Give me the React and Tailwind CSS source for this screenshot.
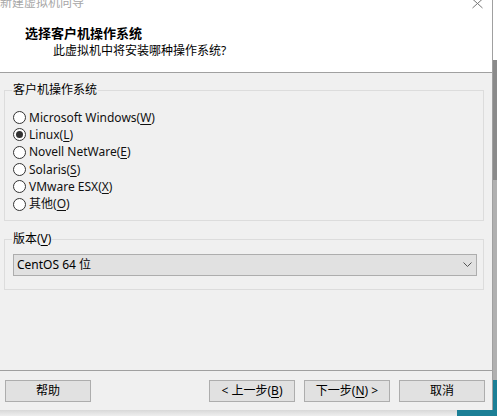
import React from 'react';

const font = "font-['Noto_Sans','Noto_Sans_CJK_SC',sans-serif]";

const options = [
  { label: 'Microsoft Windows', key: 'W' },
  { label: 'Linux', key: 'L', checked: true },
  { label: 'Novell NetWare', key: 'E' },
  { label: 'Solaris', key: 'S' },
  { label: 'VMware ESX', key: 'X' },
  { label: '其他', key: 'O' },
];

function Radio({ checked }) {
  return (
    <span className="w-[13px] h-[13px] rounded-full border border-[#333] bg-white flex items-center justify-center shrink-0">
      {checked && <span className="w-[7px] h-[7px] rounded-full bg-[#333]" />}
    </span>
  );
}

function Btn({ children }) {
  return (
    <button className="w-[86px] h-[22px] bg-[#e1e1e1] border border-[#adadad] text-[12px] leading-[20px] text-black">
      {children}
    </button>
  );
}

export default function App() {
  return (
    <div className={`w-[497px] h-[416px] flex flex-col bg-[#c4c4c4] overflow-hidden ${font}`}>
      <div className="flex">
        <div className="w-[493px] h-[410px] flex flex-col bg-[#f0f0f0] border-r border-[#a0a0a0]">
          {/* header */}
          <div className="h-[73px] bg-white border-b border-[#a0a0a0] flex flex-col shrink-0">
            <div className="h-[11px] flex justify-between overflow-hidden">
              <span className="text-[12px] leading-[12px] -mt-[3px] text-[#a6a6a6]">新建虚拟机向导</span>
              <svg className="mr-[9px] -mt-[1px]" width="11" height="10" viewBox="0 0 11 10">
                <path d="M0.5 0 L10.5 9 M10.5 0 L0.5 9" stroke="#777" strokeWidth="1" fill="none" />
              </svg>
            </div>
            <div className="mt-[14px] ml-[25px] text-[13px] leading-[16px] font-bold text-black">选择客户机操作系统</div>
            <div className="mt-[2px] ml-[53px] text-[12px] leading-[16px] text-black">此虚拟机中将安装哪种操作系统?</div>
          </div>

          {/* body */}
          <div className="flex-1 flex flex-col px-[4px] pt-[9px] pr-[8px]">
            <fieldset className="border border-[#dcdcdc] h-[139px] px-[8px]">
              <legend className="px-[1px] -ml-[1px] text-[12px] leading-[16px] text-black">客户机操作系统</legend>
              <div className="flex flex-col mt-[11px]">
                {options.map((o) => (
                  <label key={o.key} className="h-[17.3px] flex items-center gap-[3px] text-[12px] text-[#111]">
                    <Radio checked={o.checked} />
                    <span>
                      {o.label}(<span className="underline underline-offset-2">{o.key}</span>)
                    </span>
                  </label>
                ))}
              </div>
            </fieldset>

            <fieldset className="mt-[10px] border border-[#dcdcdc] h-[59px] pl-[8px] pr-[6px]">
              <legend className="px-[1px] -ml-[1px] text-[12px] leading-[16px] text-black">
                版本(<span className="underline underline-offset-2">V</span>)
              </legend>
              <div className="mt-[7px] h-[22px] bg-[#e1e1e1] border border-[#adadad] flex items-center justify-between pl-[3px] pr-[4px]">
                <span className="text-[12px] text-black">CentOS 64 位</span>
                <svg width="9" height="6" viewBox="0 0 9 6">
                  <path d="M0.5 0.5 L4.5 4.5 L8.5 0.5" stroke="#555" strokeWidth="1" fill="none" />
                </svg>
              </div>
            </fieldset>
          </div>

          {/* footer */}
          <div className="h-[40px] border-t border-[#a0a0a0] flex items-start pt-[9px] pl-[5px] pr-[7px] shrink-0">
            <Btn>帮助</Btn>
            <div className="flex-1" />
            <div className="flex gap-[9px]">
              <Btn>&lt; 上一步(<span className="underline underline-offset-2">B</span>)</Btn>
              <Btn>下一步(<span className="underline underline-offset-2">N</span>) &gt;</Btn>
              <Btn>取消</Btn>
            </div>
          </div>
        </div>
        <div className="flex-1 flex flex-col">
          <div className="h-[60px] bg-white" />
          <div className="h-[120px] bg-[#8a8a8a]" />
          <div className="flex-1 bg-[#b0b0b0]" />
          <div className="h-[30px] bg-[#1b7f96]" />
        </div>
      </div>
      <div className="flex-1 bg-[linear-gradient(to_bottom,#d8d8d8,#eeeeee)] flex justify-end">
        <div className="w-[40px] bg-[#1b7f96]" />
      </div>
    </div>
  );
}
